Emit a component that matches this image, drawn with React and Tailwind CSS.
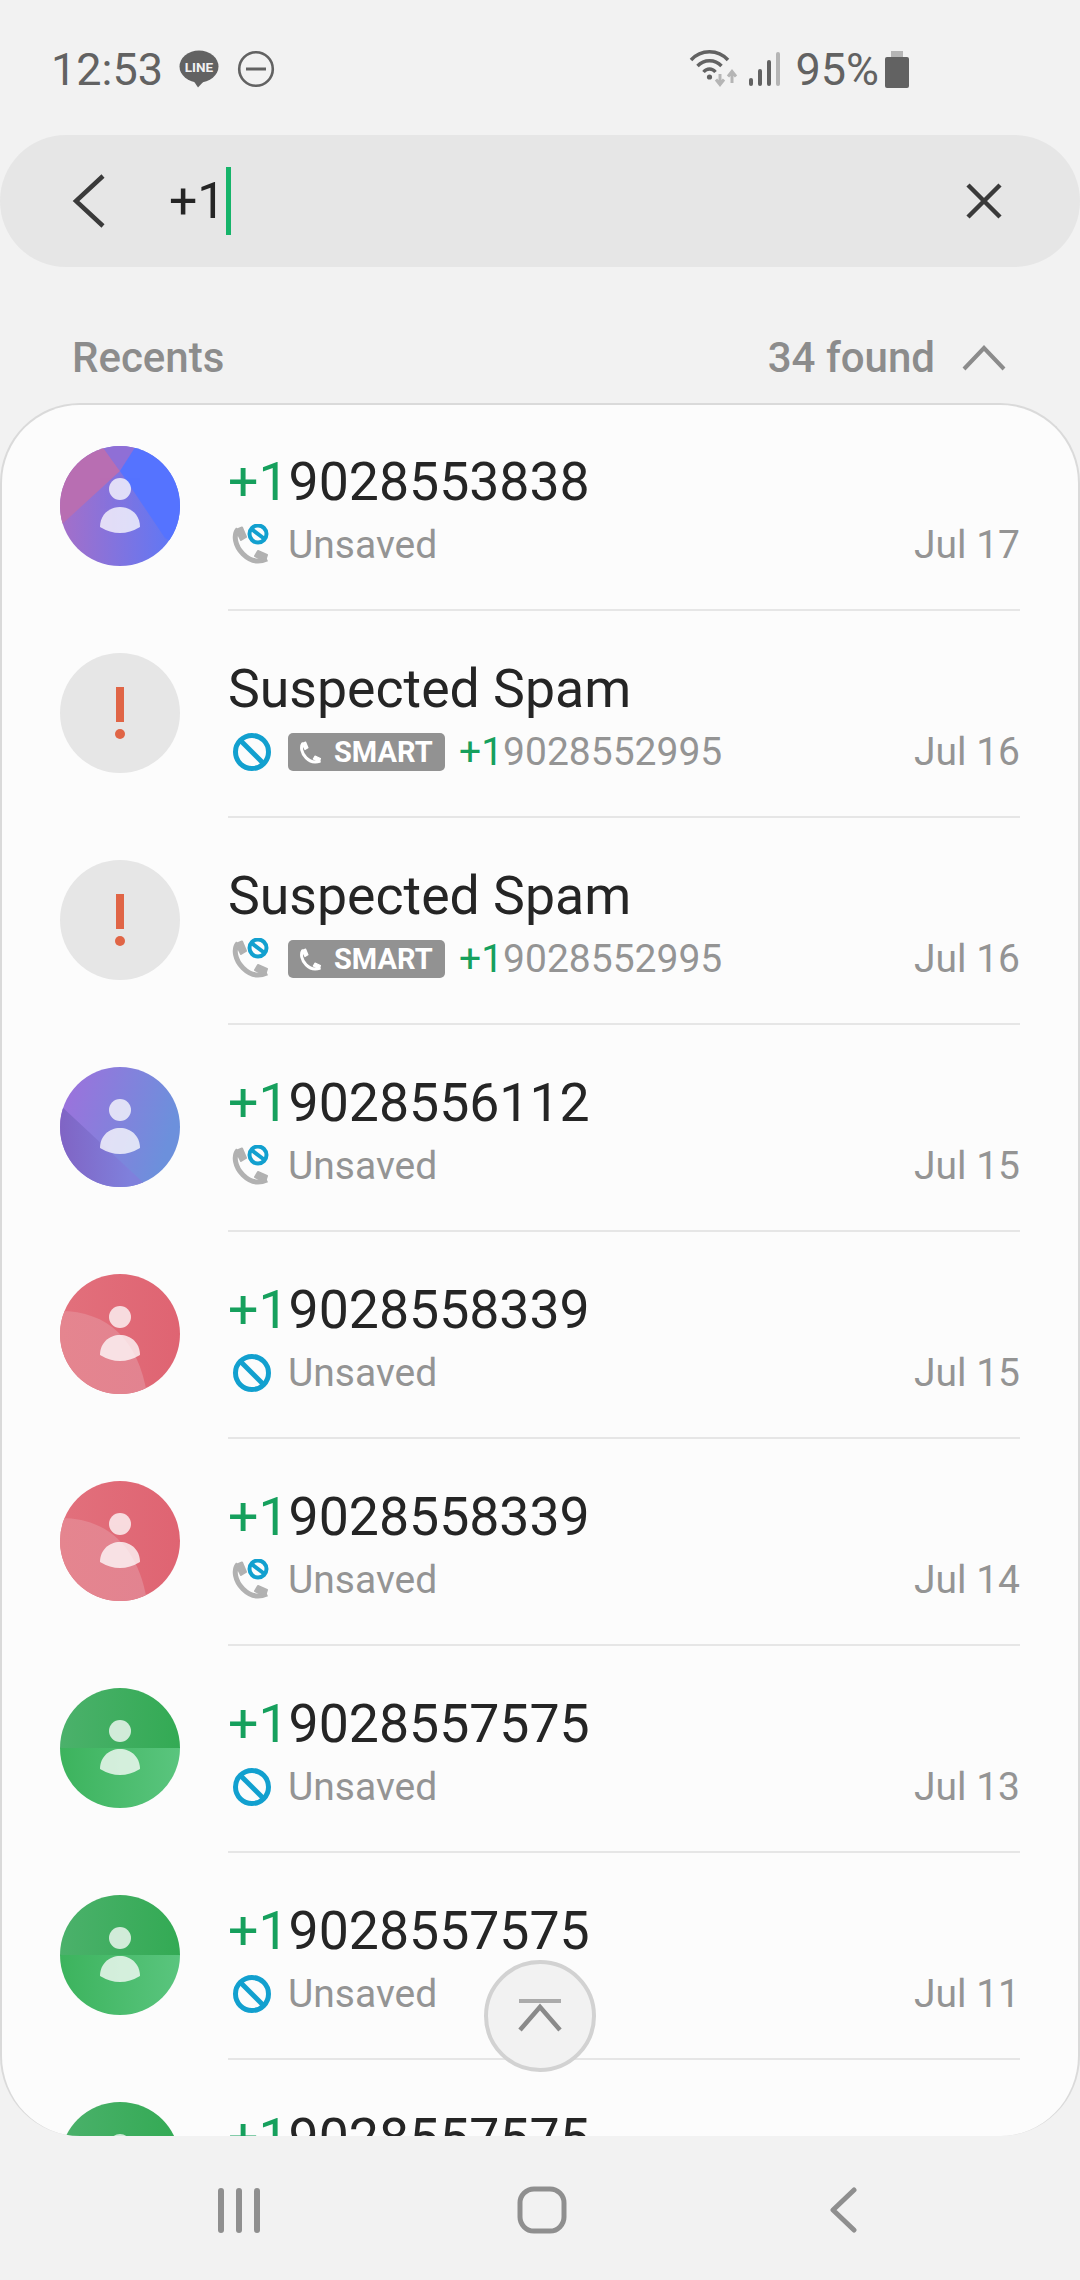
const rows = [
  { id: 1, avatar: "blue", title: "9028553838", status: "missed", sub: "Unsaved", date: "Jul 17" },
  { id: 2, avatar: "spam", title: "Suspected Spam", status: "block", number: "9028552995", date: "Jul 16" },
  { id: 3, avatar: "spam", title: "Suspected Spam", status: "missed", number: "9028552995", date: "Jul 16" },
  { id: 4, avatar: "purple", title: "9028556112", status: "missed", sub: "Unsaved", date: "Jul 15" },
  { id: 5, avatar: "red", title: "9028558339", status: "block", sub: "Unsaved", date: "Jul 15" },
  { id: 6, avatar: "red", title: "9028558339", status: "missed", sub: "Unsaved", date: "Jul 14" },
  { id: 7, avatar: "green", title: "9028557575", status: "block", sub: "Unsaved", date: "Jul 13" },
  { id: 8, avatar: "green", title: "9028557575", status: "block", sub: "Unsaved", date: "Jul 11" },
  { id: 9, avatar: "green", title: "9028557575", status: "block", sub: "Unsaved", date: "Jul 10" },
];

const Person = ({ fill }) => (
  <>
    <circle cx="60" cy="43" r="11" fill={fill} />
    <path d="M40 81C40 69 49 61 60 61S80 69 80 81Q60 93 40 81Z" fill={fill} />
  </>
);

const Avatar = ({ kind, uid }) => {
  const clip = `clip-${uid}`;
  const a = `a-${uid}`;
  const b = `b-${uid}`;
  if (kind === "spam") {
    return (
      <svg width="120" height="120" viewBox="0 0 120 120" className="shrink-0">
        <circle cx="60" cy="60" r="60" fill="#e6e6e6" />
        <rect x="56" y="34" width="8" height="35" fill="#e06546" />
        <circle cx="60" cy="81" r="5" fill="#e06546" />
      </svg>
    );
  }
  return (
    <svg width="120" height="120" viewBox="0 0 120 120" className="shrink-0">
      <defs>
        <clipPath id={clip}>
          <circle cx="60" cy="60" r="60" />
        </clipPath>
        {kind === "blue" && (
          <linearGradient id={a} x1="0" x2="1" y1="0" y2="0">
            <stop offset="0" stopColor="#a56fc8" />
            <stop offset="1" stopColor="#5a78f8" />
          </linearGradient>
        )}
        {kind === "purple" && (
          <>
            <linearGradient id={a} x1="0" x2="1" y1="0" y2="0.3">
              <stop offset="0" stopColor="#a06fdc" />
              <stop offset="1" stopColor="#6c90dc" />
            </linearGradient>
            <linearGradient id={b} x1="0" x2="1" y1="0" y2="0">
              <stop offset="0" stopColor="#8064c4" />
              <stop offset="0.8" stopColor="#7f80dc" />
            </linearGradient>
          </>
        )}
        {kind === "red" && (
          <>
            <linearGradient id={a} x1="0" x2="1" y1="0" y2="0">
              <stop offset="0" stopColor="#e2707c" />
              <stop offset="1" stopColor="#df6472" />
            </linearGradient>
            <linearGradient id={b} x1="0" x2="1" y1="0" y2="0">
              <stop offset="0" stopColor="#e5858f" />
              <stop offset="1" stopColor="#e28390" />
            </linearGradient>
          </>
        )}
        {kind === "green" && (
          <>
            <linearGradient id={a} x1="0" x2="1" y1="0" y2="0">
              <stop offset="0" stopColor="#4bb16b" />
              <stop offset="1" stopColor="#33aa54" />
            </linearGradient>
            <linearGradient id={b} x1="0" x2="1" y1="0" y2="0">
              <stop offset="0" stopColor="#3cb35d" />
              <stop offset="1" stopColor="#5ac57e" />
            </linearGradient>
          </>
        )}
      </defs>
      <g clipPath={`url(#${clip})`}>
        {kind === "blue" && (
          <>
            <rect width="120" height="120" fill={`url(#${a})`} />
            <polygon points="0,80 60,25 42,0 0,0" fill="#b86eb2" />
            <polygon points="42,0 76,0 60,25" fill="#8f6fd6" />
            <polygon points="60,25 76,0 120,0 120,100 105,92" fill="#5573ff" />
          </>
        )}
        {kind === "purple" && (
          <>
            <rect width="120" height="120" fill={`url(#${a})`} />
            <polygon points="0,38 88,120 0,120" fill={`url(#${b})`} />
          </>
        )}
        {kind === "red" && (
          <>
            <rect width="120" height="120" fill={`url(#${a})`} />
            <path d="M0 37C48 37 78 66 87 120L0 120Z" fill={`url(#${b})`} />
          </>
        )}
        {kind === "green" && (
          <>
            <rect width="120" height="60" fill={`url(#${a})`} />
            <rect y="60" width="120" height="60" fill={`url(#${b})`} />
          </>
        )}
      </g>
      <g opacity="0.76">
        <Person fill="#ffffff" />
      </g>
    </svg>
  );
};

const BlockIcon = () => (
  <svg width="42" height="42" viewBox="0 0 42 42" className="shrink-0">
    <circle cx="21" cy="21" r="16.5" fill="none" stroke="#12a0cf" strokeWidth="5" />
    <path d="M9.5 9.5L32.5 32.5" stroke="#12a0cf" strokeWidth="5" />
  </svg>
);

const Handset = ({ color }) => (
  <>
    <path d="M7 5C2 11 4 22 12 30S29 38 36 35" fill="none" stroke={color} strokeWidth="5" />
    <path d="M5 6L11 3.5L15 13L10 16Z M24 32L27 27L36 31L34 37Z" fill={color} stroke={color} strokeWidth="2" strokeLinejoin="round" />
  </>
);

const MissedIcon = () => (
  <svg width="42" height="42" viewBox="0 0 42 42" className="shrink-0">
    <Handset color="#b1b1b1" />
    <circle cx="27" cy="10" r="8.5" fill="#fcfcfc" stroke="#12a0cf" strokeWidth="4" />
    <path d="M21 5.5L33 14.5" stroke="#12a0cf" strokeWidth="4" />
  </svg>
);

const SmartBadge = () => (
  <span className="flex h-[38px] w-[157px] items-center rounded-[5px] bg-[#929292] pl-[11px] text-[29px] font-bold leading-none text-white">
    <svg width="25" height="25" viewBox="0 0 42 42" className="mr-[10px] shrink-0">
      <Handset color="#ffffff" />
    </svg>
    SMART
  </span>
);

const Row = ({ row }) => (
  <div className="flex h-[207px] pl-[60px] pr-[60px]">
    <div className="flex w-[168px] shrink-0 items-center pb-[4px]">
      <Avatar kind={row.avatar} uid={row.id} />
    </div>
    <div className="min-w-0 flex-1 border-b-2 border-[#e6e6e6] pt-[47px]">
      <div className="h-[62px] text-[53.6px] leading-[62px] text-[#252525]">
        {row.title.startsWith("Suspected") ? (
          row.title
        ) : (
          <>
            <span className="text-[#16a05d]">+1</span>
            {row.title}
          </>
        )}
      </div>
      <div className="mt-[9px] flex h-[46px] items-center text-[39px] leading-[46px] text-[#949494]">
        <span className="flex w-[60px] shrink-0 items-center pl-[3px]">
          {row.status === "block" ? <BlockIcon /> : <MissedIcon />}
        </span>
        {row.number && <SmartBadge />}
        {row.number && (
          <span className="ml-[14px]">
            <span className="text-[#16a05d]">+1</span>
            {row.number}
          </span>
        )}
        {row.sub && <span>{row.sub}</span>}
        <span className="ml-auto">{row.date}</span>
      </div>
    </div>
  </div>
);

const LineIcon = () => (
  <svg width="40" height="38" viewBox="0 0 40 38" className="ml-[16px] shrink-0">
    <ellipse cx="20" cy="16.5" rx="19.5" ry="16" fill="#626262" />
    <path d="M14 30L26 30L19 37.5Z" fill="#626262" />
    <text x="20" y="21.5" textAnchor="middle" fontSize="13.5" fontWeight="700" fill="#f2f2f2" fontFamily="Roboto, sans-serif">LINE</text>
  </svg>
);

const DndIcon = () => (
  <svg width="38" height="38" viewBox="0 0 38 38" className="ml-[18px] shrink-0">
    <circle cx="19" cy="19" r="16.8" fill="none" stroke="#626262" strokeWidth="2.6" />
    <path d="M9 19H29" stroke="#626262" strokeWidth="3" />
  </svg>
);

const WifiIcon = () => (
  <svg width="50" height="38" viewBox="0 0 50 38" className="shrink-0">
    <path d="M2 10C12 -1 29 -1 39 10" fill="none" stroke="#626262" strokeWidth="3.4" />
    <path d="M8.5 16C15 9 26 9 32.5 16" fill="none" stroke="#626262" strokeWidth="3.4" />
    <path d="M14.5 22C18 18 23 18 26.5 22" fill="none" stroke="#626262" strokeWidth="3.4" />
    <circle cx="20.5" cy="27" r="2.6" fill="#626262" />
    <path d="M31 24V33M27 29.5L31 34.5L35 29.5" fill="none" stroke="#b5b5b5" strokeWidth="3" />
    <path d="M43 33V24M39 26.5L43 21.5L47 26.5" fill="none" stroke="#b5b5b5" strokeWidth="3" />
  </svg>
);

const SignalIcon = () => (
  <svg width="32" height="36" viewBox="0 0 32 36" className="ml-[10px] shrink-0">
    <rect x="0" y="27" width="4" height="8" rx="2" fill="#626262" />
    <rect x="9" y="18" width="4" height="17" rx="2" fill="#626262" />
    <rect x="18" y="9" width="4" height="26" rx="2" fill="#626262" />
    <rect x="27" y="1" width="4" height="34" rx="2" fill="#b5b5b5" />
  </svg>
);

const BatteryIcon = () => (
  <svg width="24" height="37" viewBox="0 0 24 37" className="ml-[6px] shrink-0">
    <rect x="6" y="0" width="12" height="6" fill="#b5b5b5" />
    <rect x="0" y="6" width="24" height="31" rx="2" fill="#626262" />
  </svg>
);

const StatusBar = () => (
  <div className="flex h-[135px] items-center justify-between pl-[51px] pr-[171px] pt-[3px] text-[#626262]">
    <div className="flex items-center">
      <span className="text-[45px] leading-none">12:53</span>
      <LineIcon />
      <DndIcon />
    </div>
    <div className="flex items-center">
      <WifiIcon />
      <SignalIcon />
      <span className="ml-[14px] text-[45px] leading-none">95%</span>
      <BatteryIcon />
    </div>
  </div>
);

const SearchBar = () => (
  <div className="flex h-[132px] items-center rounded-[66px] bg-[#e6e6e6] pl-[71px] pr-[77px]">
    <svg width="36" height="56" viewBox="0 0 36 56" className="shrink-0">
      <path d="M32 3L5 28L32 53" fill="none" stroke="#3a3a3a" strokeWidth="4.5" />
    </svg>
    <span className="ml-[62px] text-[50px] leading-none text-[#252525]">+1</span>
    <span className="ml-[1px] h-[68px] w-[5px] bg-[#16b46a]" />
    <svg width="38" height="38" viewBox="0 0 38 38" className="ml-auto shrink-0">
      <path d="M3 3L35 35M35 3L3 35" fill="none" stroke="#3a3a3a" strokeWidth="4.5" />
    </svg>
  </div>
);

const ListHeader = () => (
  <div className="flex h-[136px] items-center justify-between pl-[72px] pr-[74px] pt-[46px] text-[42px] font-medium leading-none text-[#8c8c8c]">
    <span>Recents</span>
    <span className="flex items-center">
      34 found
      <svg width="44" height="26" viewBox="0 0 44 26" className="ml-[27px]">
        <path d="M2 24L22 3L42 24" fill="none" stroke="#8c8c8c" strokeWidth="4" />
      </svg>
    </span>
  </div>
);

const ScrollTop = () => (
  <div className="absolute bottom-[64px] left-[484px] flex h-[112px] w-[112px] items-center justify-center rounded-full border-4 border-[#d2d2d2] bg-[#f2f2f2]">
    <svg width="44" height="36" viewBox="0 0 44 36">
      <rect x="1" y="1" width="42" height="4" fill="#ababab" />
      <path d="M2 32L22 9L42 32" fill="none" stroke="#8a8a8a" strokeWidth="4.5" />
    </svg>
  </div>
);

const NavBar = () => (
  <div className="grid h-[144px] grid-cols-3 items-center px-[88px] pt-[4px]">
    <div className="flex justify-center">
      <svg width="42" height="45" viewBox="0 0 42 45">
        <rect x="0" y="0" width="6" height="45" rx="3" fill="#8f8f8f" />
        <rect x="18" y="0" width="6" height="45" rx="3" fill="#8f8f8f" />
        <rect x="36" y="0" width="6" height="45" rx="3" fill="#8f8f8f" />
      </svg>
    </div>
    <div className="flex justify-center pl-[4px]">
      <svg width="50" height="48" viewBox="0 0 50 48">
        <rect x="3" y="3" width="44" height="42" rx="14" fill="none" stroke="#8f8f8f" strokeWidth="5" />
      </svg>
    </div>
    <div className="flex justify-center pl-[6px]">
      <svg width="30" height="46" viewBox="0 0 30 46">
        <path d="M25 3L4 23L25 43" fill="none" stroke="#8f8f8f" strokeWidth="5" strokeLinecap="round" strokeLinejoin="round" />
      </svg>
    </div>
  </div>
);

export default function App() {
  return (
    <div className="flex h-[2280px] w-[1080px] flex-col overflow-hidden bg-[#f2f2f2] [font-family:Roboto,sans-serif]">
      <StatusBar />
      <SearchBar />
      <ListHeader />
      <div className="relative min-h-0 flex-1">
        <div className="h-full overflow-hidden rounded-[80px] border-x-2 border-t-2 border-[#dadada] bg-[#fcfcfc]">
          <div className="-mx-[2px] -mt-[1px]">
            {rows.map((row) => (
              <Row key={row.id} row={row} />
            ))}
          </div>
        </div>
        <ScrollTop />
      </div>
      <NavBar />
    </div>
  );
}
